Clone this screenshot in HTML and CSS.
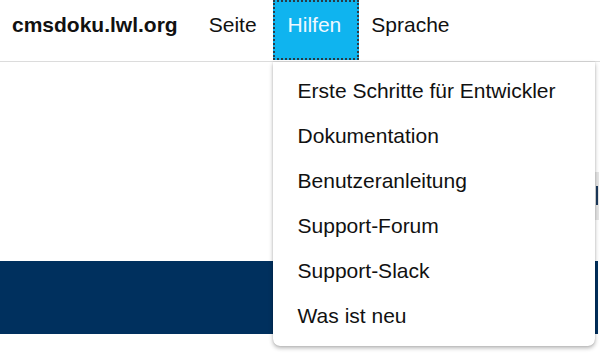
FILE: index.html
```html
<!DOCTYPE html>
<html>
<head>
  <meta charset="utf-8">
  <title>cmsdoku.lwl.org</title>
  <link rel="stylesheet" href="styles.css">
</head>
<body>
  <header class="navbar">
    <a class="brand" href="#">cmsdoku.lwl.org</a>
    <ul class="nav">
      <li class="nav-item"><a href="#">Seite</a></li>
      <li class="nav-item open">
        <a href="#" class="active">Hilfen</a>
        <ul class="dropdown">
          <li><a href="#">Erste Schritte für Entwickler</a></li>
          <li><a href="#">Dokumentation</a></li>
          <li><a href="#">Benutzeranleitung</a></li>
          <li><a href="#">Support-Forum</a></li>
          <li><a href="#">Support-Slack</a></li>
          <li><a href="#">Was ist neu</a></li>
        </ul>
      </li>
      <li class="nav-item"><a href="#">Sprache</a></li>
    </ul>
  </header>

  <main class="content">
    <div class="side-tab"></div>
    <div class="band"></div>
  </main>
</body>
</html>
```

FILE: styles.css
```css
body {
  margin: 0;
  font-family: "Liberation Sans", Arial, sans-serif;
  background: #fff;
  color: #111;
}
a {
  color: inherit;
  text-decoration: none;
}
.navbar {
  display: flex;
  height: 61px;
  border-bottom: 1px solid #dcdcdc;
  position: relative;
  z-index: 2;
}
.brand {
  font-size: 21px;
  font-weight: 700;
  line-height: 24px;
  padding: 13px 0 0 12px;
  margin-right: 19px;
}
.nav {
  display: flex;
  list-style: none;
  margin: 0;
  padding: 0;
}
.nav-item {
  position: relative;
}
.nav-item > a {
  display: block;
  height: 61px;
  box-sizing: border-box;
  padding: 13px 16px 0 12px;
  font-size: 21px;
  line-height: 24px;
}
.nav-item > a.active {
  height: 60px;
  padding: 13px 18px 0 15px;
  background: #0fb4ef;
  color: #eef8ff;
  outline: 2px dotted #2b3a45;
  outline-offset: -2px;
}
.dropdown {
  position: absolute;
  top: 62px;
  left: 0;
  width: 322px;
  margin: 0;
  padding: 6px 0 8px;
  list-style: none;
  background: #fff;
  border-radius: 0 0 7px 7px;
  box-shadow: 0 2px 4px rgba(0,0,0,0.3), 0 0 1px rgba(0,0,0,0.25);
}
.dropdown a {
  display: block;
  height: 45px;
  line-height: 45px;
  padding-left: 25px;
  font-size: 21px;
  color: #111;
}
.content {
  position: relative;
  height: 292px;
  padding-top: 199px;
  box-sizing: border-box;
}
.band {
  width: 598px;
  height: 73px;
  background: #00305e;
}
.side-tab {
  position: absolute;
  right: 1px;
  top: 110px;
  width: 4px;
  height: 48px;
  background: #e6e6e6;
}
.side-tab::after {
  content: "";
  position: absolute;
  left: 1px;
  top: 14px;
  width: 2px;
  height: 19px;
  background: #1c3a5c;
}
```
